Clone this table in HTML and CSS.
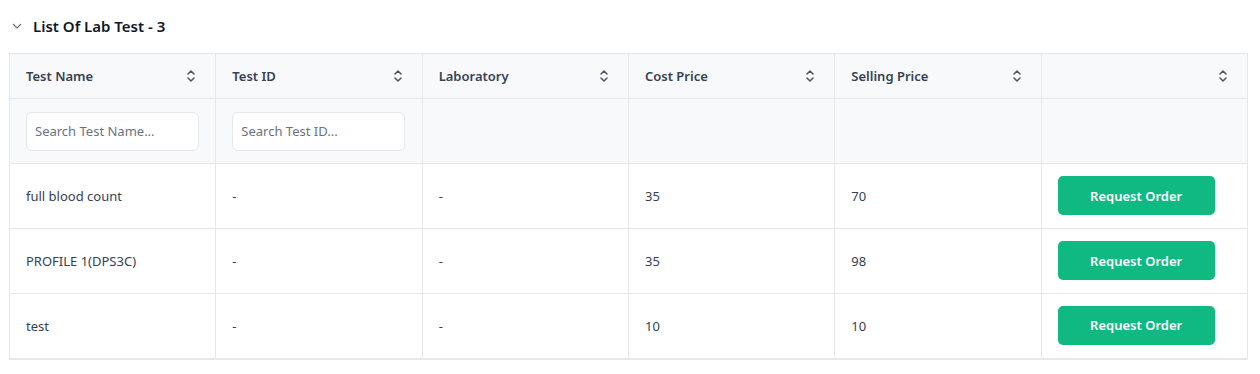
FILE: index.html
```html
<!DOCTYPE html>
<html>
<head>
<meta charset="utf-8">
<link rel="stylesheet" href="styles.css">
</head>
<body>
<div class="page">
  <div class="title">
    <svg class="chev" width="10" height="6" viewBox="0 0 10 6"><path d="M1 1 L5 5 L9 1" fill="none" stroke="#6b7280" stroke-width="1.2"/></svg>
    <span>List Of Lab Test - 3</span>
  </div>
  <table class="grid">
    <thead>
      <tr class="head">
        <th><div class="th"><span>Test Name</span><svg class="sort" width="10" height="14" viewBox="0 0 10 14"><path d="M2 5 L5 2 L8 5 M2 9 L5 12 L8 9" fill="none" stroke="#4b5563" stroke-width="1.5" stroke-linecap="round" stroke-linejoin="round"/></svg></div></th>
        <th><div class="th"><span>Test ID</span><svg class="sort" width="10" height="14" viewBox="0 0 10 14"><path d="M2 5 L5 2 L8 5 M2 9 L5 12 L8 9" fill="none" stroke="#4b5563" stroke-width="1.5" stroke-linecap="round" stroke-linejoin="round"/></svg></div></th>
        <th><div class="th"><span>Laboratory</span><svg class="sort" width="10" height="14" viewBox="0 0 10 14"><path d="M2 5 L5 2 L8 5 M2 9 L5 12 L8 9" fill="none" stroke="#4b5563" stroke-width="1.5" stroke-linecap="round" stroke-linejoin="round"/></svg></div></th>
        <th><div class="th"><span>Cost Price</span><svg class="sort" width="10" height="14" viewBox="0 0 10 14"><path d="M2 5 L5 2 L8 5 M2 9 L5 12 L8 9" fill="none" stroke="#4b5563" stroke-width="1.5" stroke-linecap="round" stroke-linejoin="round"/></svg></div></th>
        <th><div class="th"><span>Selling Price</span><svg class="sort" width="10" height="14" viewBox="0 0 10 14"><path d="M2 5 L5 2 L8 5 M2 9 L5 12 L8 9" fill="none" stroke="#4b5563" stroke-width="1.5" stroke-linecap="round" stroke-linejoin="round"/></svg></div></th>
        <th><div class="th"><span></span><svg class="sort" width="10" height="14" viewBox="0 0 10 14"><path d="M2 5 L5 2 L8 5 M2 9 L5 12 L8 9" fill="none" stroke="#4b5563" stroke-width="1.5" stroke-linecap="round" stroke-linejoin="round"/></svg></div></th>
      </tr>
      <tr class="filter">
        <td><input class="search" type="text" placeholder="Search Test Name..."></td>
        <td><input class="search" type="text" placeholder="Search Test ID..."></td>
        <td></td><td></td><td></td><td></td>
      </tr>
    </thead>
    <tbody>
      <tr><td>full blood count</td><td>-</td><td>-</td><td>35</td><td>70</td><td><button class="btn">Request Order</button></td></tr>
      <tr><td>PROFILE 1(DPS3C)</td><td>-</td><td>-</td><td>35</td><td>98</td><td><button class="btn">Request Order</button></td></tr>
      <tr><td>test</td><td>-</td><td>-</td><td>10</td><td>10</td><td><button class="btn">Request Order</button></td></tr>
    </tbody>
  </table>
</div>
</body>
</html>
```
FILE: styles.css
```css
* { box-sizing: border-box; }
body { margin: 0; background: #fff; font-family: "Noto Sans", "Open Sans", sans-serif; color: #374151; }
.page { padding: 14px 12px 0 9px; }
.title { display: flex; align-items: center; height: 24px; gap: 11px; padding-left: 3px; font-size: 15px; font-weight: 600; color: #111827; }
.title .chev { flex: none; }
.grid { margin-top: 15px; width: 1239px; border-collapse: collapse; table-layout: fixed; border: 1px solid #e5e7eb; border-bottom-width: 2px; }
.grid th, .grid td { border: 1px solid #e5e7eb; padding: 0 16px; font-size: 13px; text-align: left; }
.head th { height: 45px; background: #f8f9fb; font-weight: 600; color: #374151; }
.th { display: flex; align-items: center; justify-content: space-between; padding-right: 3px; }
.filter td { height: 65px; background: #f8f9fb; }
tbody td { height: 65px; color: #374151; }
.search { display: block; width: 173px; height: 39px; border: 1px solid #e5e7eb; border-radius: 6px; background: #fff; padding: 0 8px; font-family: inherit; font-size: 13px; color: #374151; outline: none; }
.search::placeholder { color: #6b7280; }
.btn { display: block; width: 157px; height: 39px; margin-top: -1px; border: none; border-radius: 5px; background: #10b981; color: #fff; font-family: inherit; font-size: 13px; font-weight: 600; cursor: pointer; }
```
